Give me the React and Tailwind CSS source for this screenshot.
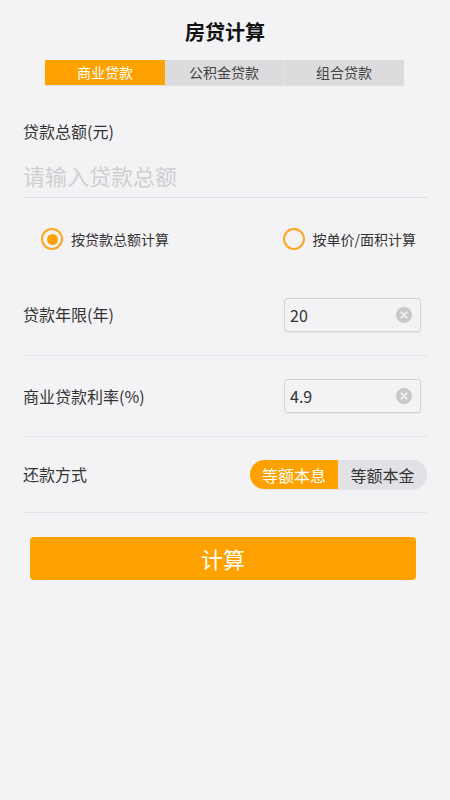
import React from "react";

const font = { fontFamily: '"Noto Sans CJK SC", "Noto Sans", sans-serif' };

function ClearIcon() {
  return (
    <svg width="16" height="16" viewBox="0 0 16 16" className="shrink-0">
      <circle cx="8" cy="8" r="8" fill="#c9c9cb" />
      <path d="M5.3 5.3 L10.7 10.7 M10.7 5.3 L5.3 10.7" stroke="#f3f2f5" strokeWidth="1.8" strokeLinecap="round" />
    </svg>
  );
}

function Radio({ checked, label }) {
  return (
    <div className="flex items-center gap-[8px]">
      <div className="w-[22px] h-[22px] rounded-full border-[2.5px] border-[#ffa51f] flex items-center justify-center">
        {checked && <div className="w-[11px] h-[11px] rounded-full bg-[#ffa200]" />}
      </div>
      <span className="text-[14px] leading-[20px] text-[#333333]">{label}</span>
    </div>
  );
}

function InputRow({ label, value, h }) {
  return (
    <div className={`flex items-center justify-between border-b border-[#e3e2e6] ${h}`}>
      <span className="text-[16px] leading-[24px] text-[#333333] -mt-[1px]">{label}</span>
      <div className="mr-[6px] w-[137px] h-[34px] border border-[#d3d3d6] rounded-[3px] flex items-center justify-between pl-[5px] pr-[8px] shadow-[0_1px_1px_rgba(0,0,0,0.05)]">
        <span className="text-[16px] leading-[24px] text-[#333333]">{value}</span>
        <ClearIcon />
      </div>
    </div>
  );
}

export default function App() {
  return (
    <div className="w-[450px] h-[800px] bg-[#f3f2f5] overflow-hidden" style={font}>
      <div className="pt-[18px] h-[47px] text-center text-[20px] leading-[28px] font-bold text-[#111111]">
        房贷计算
      </div>
      <div className="mt-[13px] ml-[45px] w-[359px] h-[25px] flex bg-[#dcdbde] shadow-[0_1px_1px_rgba(0,0,0,0.08)]">
        <div className="w-[120px] bg-[#ffa200] text-white text-[14px] flex items-center justify-center">商业贷款</div>
        <div className="w-[119px] text-[#444444] text-[14px] flex items-center justify-center border-r border-[#e6e5e8]">公积金贷款</div>
        <div className="w-[120px] text-[#444444] text-[14px] flex items-center justify-center">组合贷款</div>
      </div>

      <div className="px-[23px]">
        <div className="mt-[34px] text-[16px] leading-[24px] text-[#333333]">贷款总额(元)</div>
        <div className="mt-[17px] pb-[7px] border-b border-[#dedde1] text-[22px] leading-[30px] text-[#cfcfd1]">
          请输入贷款总额
        </div>
        <div className="mt-[30px] flex items-center justify-between pl-[18px]">
          <Radio checked label="按贷款总额计算" />
          <div className="mr-[11px]">
            <Radio label="按单价/面积计算" />
          </div>
        </div>
        <div className="mt-[24px]">
          <InputRow label="贷款年限(年)" value="20" h="h-[82px]" />
          <InputRow label="商业贷款利率(%)" value="4.9" h="h-[81px]" />
          <div className="flex items-center justify-between border-b border-[#e3e2e6] h-[76px]">
            <span className="text-[16px] leading-[24px] text-[#333333] -mt-[1px]">还款方式</span>
            <div className="flex h-[29px] rounded-full overflow-hidden bg-[#e2e1e5] shadow-[0_1px_1px_rgba(0,0,0,0.06)]">
              <div className="w-[88px] bg-[#ffa200] text-white text-[16px] flex items-center justify-center">等额本息</div>
              <div className="w-[89px] text-[#333333] text-[16px] flex items-center justify-center">等额本金</div>
            </div>
          </div>
        </div>
      </div>

      <button className="mt-[24px] ml-[30px] w-[386px] h-[43px] rounded-[4px] bg-[#ffa200] text-white text-[22px] flex items-center justify-center">
        计算
      </button>
    </div>
  );
}
